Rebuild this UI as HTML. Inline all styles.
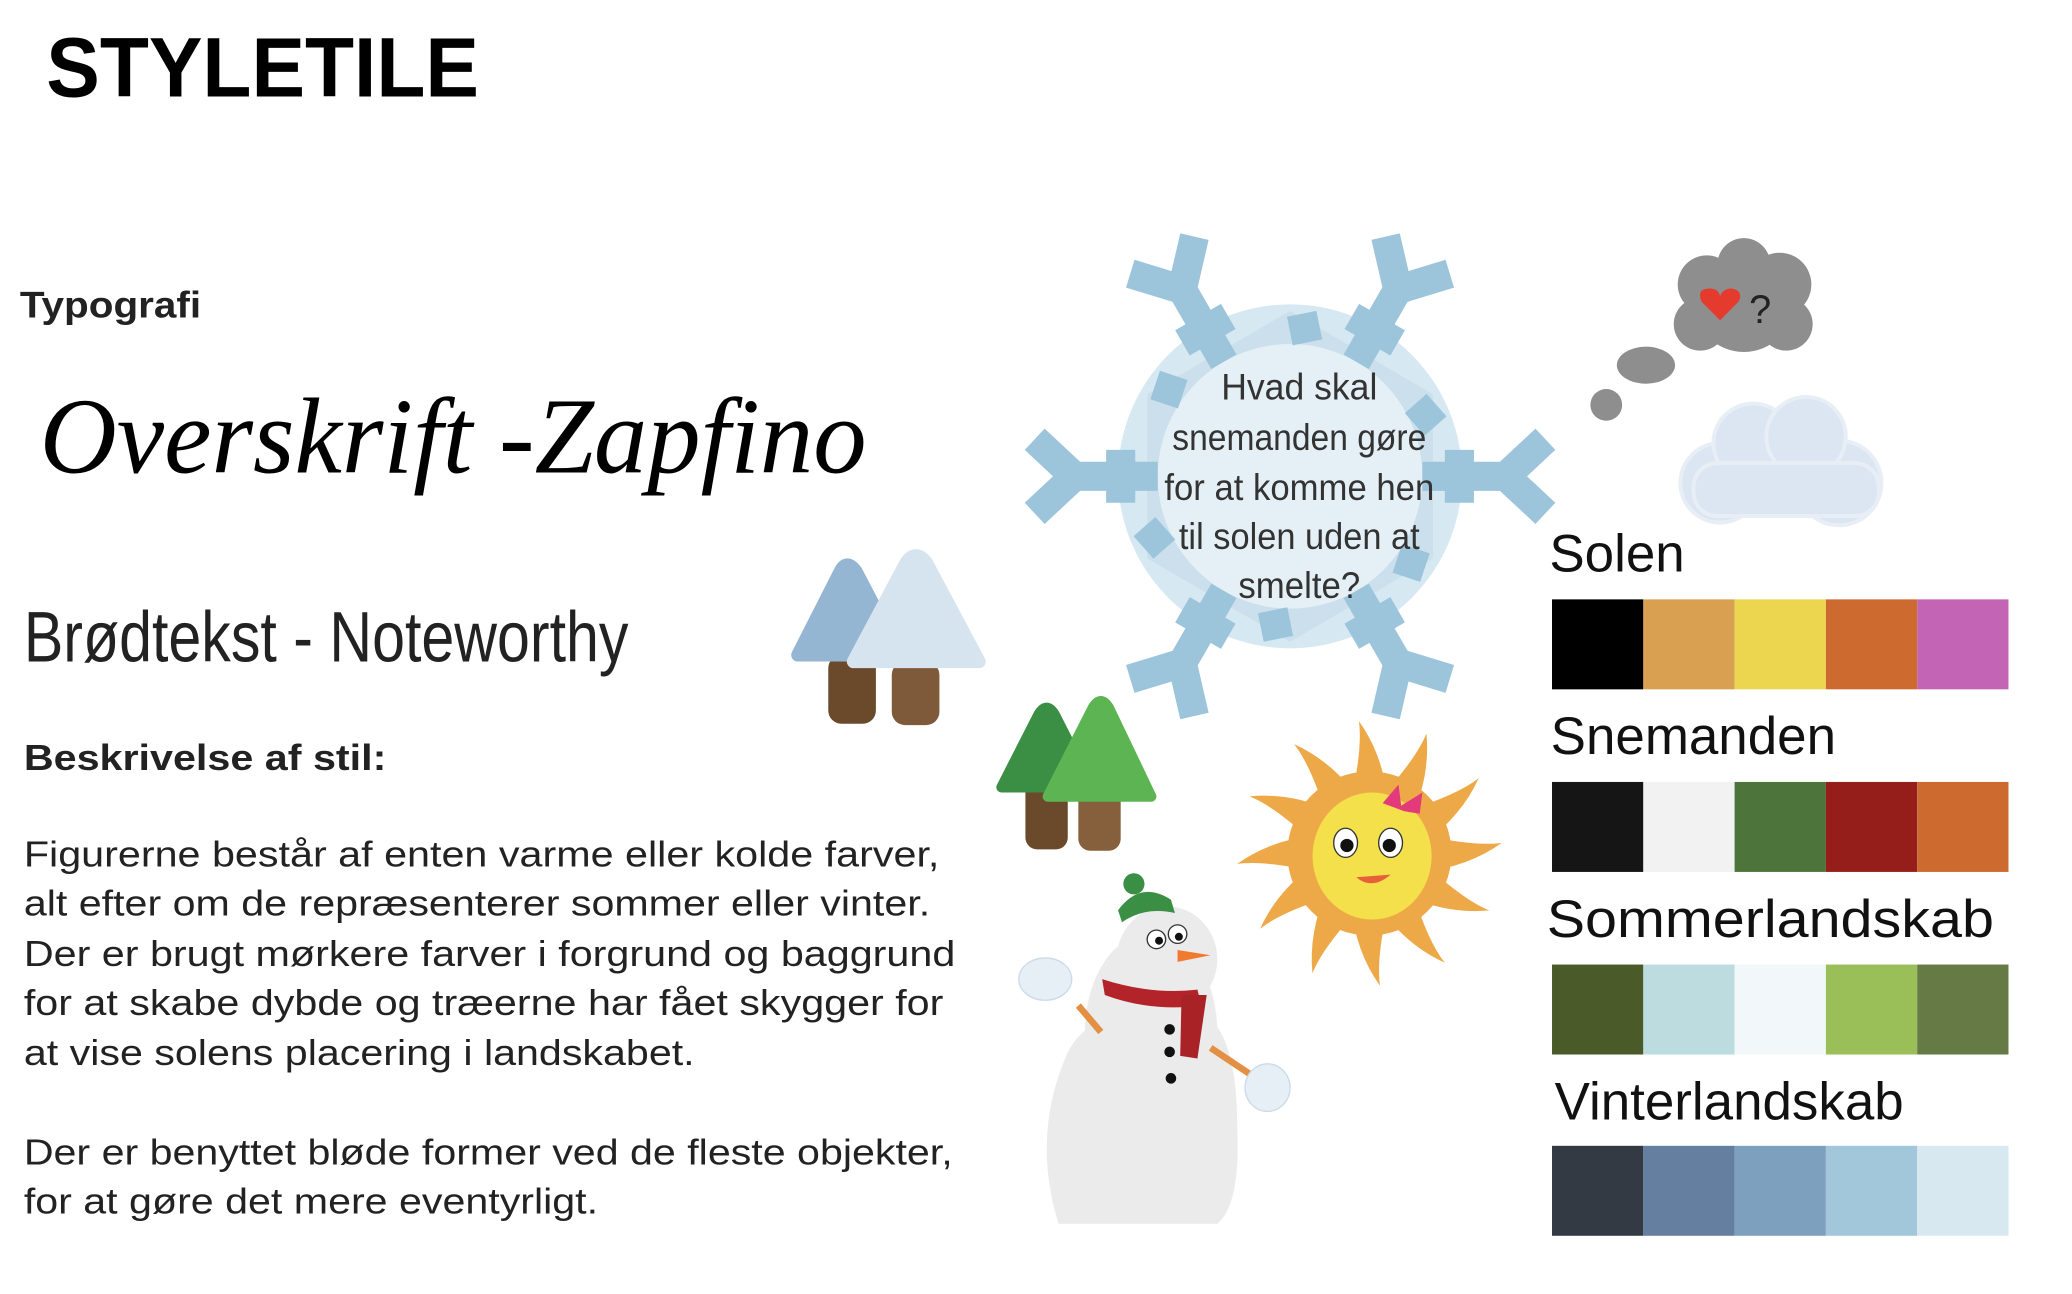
<!DOCTYPE html>
<html><head><meta charset="utf-8"><style>
html,body{margin:0;padding:0;background:#fff;width:2072px;height:1294px;overflow:hidden}
svg{display:block}
text{font-family:"Liberation Sans",sans-serif}
</style></head><body>
<svg width="2072" height="1294" viewBox="0 0 1566 978" xmlns="http://www.w3.org/2000/svg">
<rect width="1566" height="978" fill="#fff"/>
<text x="35" y="73" font-size="64" font-weight="bold" textLength="327" lengthAdjust="spacingAndGlyphs">STYLETILE</text>
<text x="15" y="240" font-size="28" font-weight="bold" fill="#222" textLength="137" lengthAdjust="spacingAndGlyphs">Typografi</text>
<text x="30" y="357" font-size="82" font-style="italic" style="font-family:'Liberation Serif',serif" textLength="625" lengthAdjust="spacingAndGlyphs">Overskrift -Zapfino</text>
<text x="18" y="500" font-size="54" fill="#222" textLength="457" lengthAdjust="spacingAndGlyphs">Brødtekst - Noteworthy</text>
<text x="18" y="582" font-size="27" font-weight="bold" fill="#222" textLength="274" lengthAdjust="spacingAndGlyphs">Beskrivelse af stil:</text>
<g font-size="27" fill="#222">
<text x="18" y="655" textLength="692" lengthAdjust="spacingAndGlyphs">Figurerne består af enten varme eller kolde farver,</text>
<text x="18" y="692" textLength="685" lengthAdjust="spacingAndGlyphs">alt efter om de repræsenterer sommer eller vinter.</text>
<text x="18" y="730" textLength="704" lengthAdjust="spacingAndGlyphs">Der er brugt mørkere farver i forgrund og baggrund</text>
<text x="18" y="767" textLength="695" lengthAdjust="spacingAndGlyphs">for at skabe dybde og træerne har fået skygger for</text>
<text x="18" y="805" textLength="507" lengthAdjust="spacingAndGlyphs">at vise solens placering i landskabet.</text>
<text x="18" y="880" textLength="702" lengthAdjust="spacingAndGlyphs">Der er benyttet bløde former ved de fleste objekter,</text>
<text x="18" y="917" textLength="434" lengthAdjust="spacingAndGlyphs">for at gøre det mere eventyrligt.</text>
</g>
<!-- snowflake -->
<g transform="translate(975,360)">
<circle r="130" fill="#d6e8f1"/>
<polygon points="0,-125 108,-62 108,62 0,125 -108,62 -108,-62" fill="#c6dde9" opacity="0.7"/>
<circle r="100" fill="#e4f0f6"/>
<g id="arm" stroke="#9cc4da" stroke-width="22" fill="none" stroke-linecap="butt">
<line x1="100" y1="0" x2="175" y2="0"/>
<line x1="163" y1="0" x2="193" y2="-28"/>
<line x1="163" y1="0" x2="193" y2="28"/>
<line x1="128" y1="-20" x2="128" y2="20"/>
<line x1="95" y1="-55" x2="110" y2="-38"/>
</g>
<use href="#arm" transform="rotate(60)"/>
<use href="#arm" transform="rotate(120)"/>
<use href="#arm" transform="rotate(180)"/>
<use href="#arm" transform="rotate(240)"/>
<use href="#arm" transform="rotate(300)"/>
</g>
<g font-size="28" fill="#333" text-anchor="middle">
<text x="982" y="302" textLength="118" lengthAdjust="spacingAndGlyphs">Hvad skal</text>
<text x="982" y="340" textLength="192" lengthAdjust="spacingAndGlyphs">snemanden gøre</text>
<text x="982" y="378" textLength="204" lengthAdjust="spacingAndGlyphs">for at komme hen</text>
<text x="982" y="415" textLength="182" lengthAdjust="spacingAndGlyphs">til solen uden at</text>
<text x="982" y="452" textLength="92" lengthAdjust="spacingAndGlyphs">smelte?</text>
</g>
<!-- blue trees -->
<rect x="626" y="495" width="36" height="52" rx="10" fill="#6b4a2c"/>
<rect x="674" y="500" width="36" height="48" rx="10" fill="#7f5a3a"/>
<path d="M603,495 L635,432 Q640,422 647,432 L680,495 Z" fill="#94b6d2" stroke="#94b6d2" stroke-width="10" stroke-linejoin="round"/>
<path d="M645,500 L685,425 Q692,415 700,425 L740,500 Z" fill="#d6e4f0" stroke="#d6e4f0" stroke-width="10" stroke-linejoin="round"/>
<!-- green trees -->
<rect x="775" y="590" width="32" height="52" rx="9" fill="#6b4a2c"/>
<rect x="815" y="595" width="32" height="48" rx="9" fill="#86603c"/>
<path d="M757,595 L785,540 Q791,530 797,540 L825,595 Z" fill="#3a8f44" stroke="#3a8f44" stroke-width="8" stroke-linejoin="round"/>
<path d="M792,602 L826,535 Q832,525 838,535 L870,602 Z" fill="#5cb452" stroke="#5cb452" stroke-width="8" stroke-linejoin="round"/>
<!-- sun -->
<g transform="translate(1035,645)">
<g fill="#eda948">
<path id="ray" d="M-14,-40 Q-5,-80 -8,-100 Q10,-75 14,-40 Z"/>
<use href="#ray" transform="rotate(30)"/><use href="#ray" transform="rotate(60)"/><use href="#ray" transform="rotate(90)"/>
<use href="#ray" transform="rotate(120)"/><use href="#ray" transform="rotate(150)"/><use href="#ray" transform="rotate(180)"/>
<use href="#ray" transform="rotate(210)"/><use href="#ray" transform="rotate(240)"/><use href="#ray" transform="rotate(270)"/>
<use href="#ray" transform="rotate(300)"/><use href="#ray" transform="rotate(330)"/>
<circle r="62"/>
</g>
<ellipse cx="2" cy="2" rx="45" ry="48" fill="#f4e04a"/>
<ellipse cx="-18" cy="-8" rx="9" ry="11" fill="#fff" stroke="#333"/><circle cx="-17" cy="-6" r="5" fill="#111"/>
<ellipse cx="16" cy="-8" rx="9" ry="11" fill="#fff" stroke="#333"/><circle cx="15" cy="-6" r="5" fill="#111"/>
<path d="M-10,18 Q2,28 16,16 Z" fill="#e8603a"/>
<path d="M10,-38 L22,-52 L24,-36 L40,-46 L38,-30 L26,-32 Z" fill="#e23a7a"/>
</g>
<!-- snowman -->
<path d="M800,925 Q780,860 805,800 Q815,775 840,770 L915,770 Q935,790 935,850 Q938,910 920,925 Z" fill="#ebebeb"/>
<ellipse cx="870" cy="780" rx="50" ry="75" fill="#ebebeb"/>
<ellipse cx="882" cy="725" rx="38" ry="40" fill="#ebebeb"/>
<line x1="815" y1="760" x2="832" y2="780" stroke="#e49044" stroke-width="5"/>
<line x1="915" y1="792" x2="945" y2="812" stroke="#e49044" stroke-width="5"/>
<ellipse cx="790" cy="740" rx="20" ry="16" fill="#e6eef6" stroke="#cddbe8"/>
<ellipse cx="958" cy="822" rx="17" ry="18" fill="#e6eef6" stroke="#cddbe8"/>
<path d="M845,688 Q862,665 885,680 L888,690 Q865,685 848,697 Z" fill="#3a8f44"/>
<circle cx="857" cy="668" r="8" fill="#3a8f44"/>
<circle cx="874" cy="710" r="7" fill="#fff" stroke="#333"/><circle cx="876" cy="711" r="3" fill="#111"/>
<circle cx="890" cy="706" r="7" fill="#fff" stroke="#333"/><circle cx="891" cy="708" r="3" fill="#111"/>
<path d="M890,718 L915,722 L890,727 Z" fill="#ef7a30"/>
<path d="M833,740 Q870,752 905,748 L908,760 Q870,765 835,752 Z" fill="#b3242a"/>
<path d="M893,752 L912,752 L905,800 L892,798 Z" fill="#a82226"/>
<circle cx="884" cy="778" r="4" fill="#111"/><circle cx="884" cy="795" r="4" fill="#111"/><circle cx="885" cy="815" r="4" fill="#111"/>
<!-- thought cloud -->
<g fill="#8e8e8e">
<circle cx="1318" cy="228" r="38"/><circle cx="1290" cy="215" r="22"/><circle cx="1345" cy="215" r="24"/><circle cx="1350" cy="245" r="20"/><circle cx="1285" cy="245" r="20"/><circle cx="1318" cy="200" r="20"/>
<ellipse cx="1244" cy="276" rx="22" ry="14"/><circle cx="1214" cy="306" r="12"/>
</g>
<path d="M1300,242 L1286,228 Q1282,218 1292,218 Q1299,218 1300,224 Q1302,218 1309,218 Q1318,220 1314,228 Z" fill="#e53a2e"/>
<text x="1322" y="244" font-size="30" fill="#222">?</text>
<!-- white cloud -->
<g fill="#dbe6f2" stroke="#e8eef6" stroke-width="3">
<circle cx="1300" cy="365" r="30"/><circle cx="1390" cy="365" r="32"/><circle cx="1325" cy="335" r="30"/><circle cx="1365" cy="330" r="30"/><rect x="1280" y="350" width="140" height="40" rx="18"/>
</g>
<!-- palettes -->
<g font-size="40" fill="#111">
<text x="1171" y="432">Solen</text>
<text x="1172" y="570">Snemanden</text>
<text x="1169" y="708" textLength="338" lengthAdjust="spacingAndGlyphs">Sommerlandskab</text>
<text x="1175" y="846">Vinterlandskab</text>
</g>
<g>
<rect x="1173" y="453" width="69" height="68" fill="#000"/><rect x="1242" y="453" width="69" height="68" fill="#d8a050"/><rect x="1311" y="453" width="69" height="68" fill="#ecd650"/><rect x="1380" y="453" width="69" height="68" fill="#cc6a30"/><rect x="1449" y="453" width="69" height="68" fill="#c464b4"/>
<rect x="1173" y="591" width="69" height="68" fill="#151515"/><rect x="1242" y="591" width="69" height="68" fill="#f2f2f2"/><rect x="1311" y="591" width="69" height="68" fill="#4d743a"/><rect x="1380" y="591" width="69" height="68" fill="#961e1a"/><rect x="1449" y="591" width="69" height="68" fill="#cc6a30"/>
<rect x="1173" y="729" width="69" height="68" fill="#4a5a28"/><rect x="1242" y="729" width="69" height="68" fill="#bcdcdf"/><rect x="1311" y="729" width="69" height="68" fill="#f2f8fa"/><rect x="1380" y="729" width="69" height="68" fill="#9bbf58"/><rect x="1449" y="729" width="69" height="68" fill="#657a44"/>
<rect x="1173" y="866" width="69" height="68" fill="#343a44"/><rect x="1242" y="866" width="69" height="68" fill="#647fa0"/><rect x="1311" y="866" width="69" height="68" fill="#7ea0bf"/><rect x="1380" y="866" width="69" height="68" fill="#a2c6da"/><rect x="1449" y="866" width="69" height="68" fill="#d8e8f0"/>
</g>
</svg>
</body></html>
